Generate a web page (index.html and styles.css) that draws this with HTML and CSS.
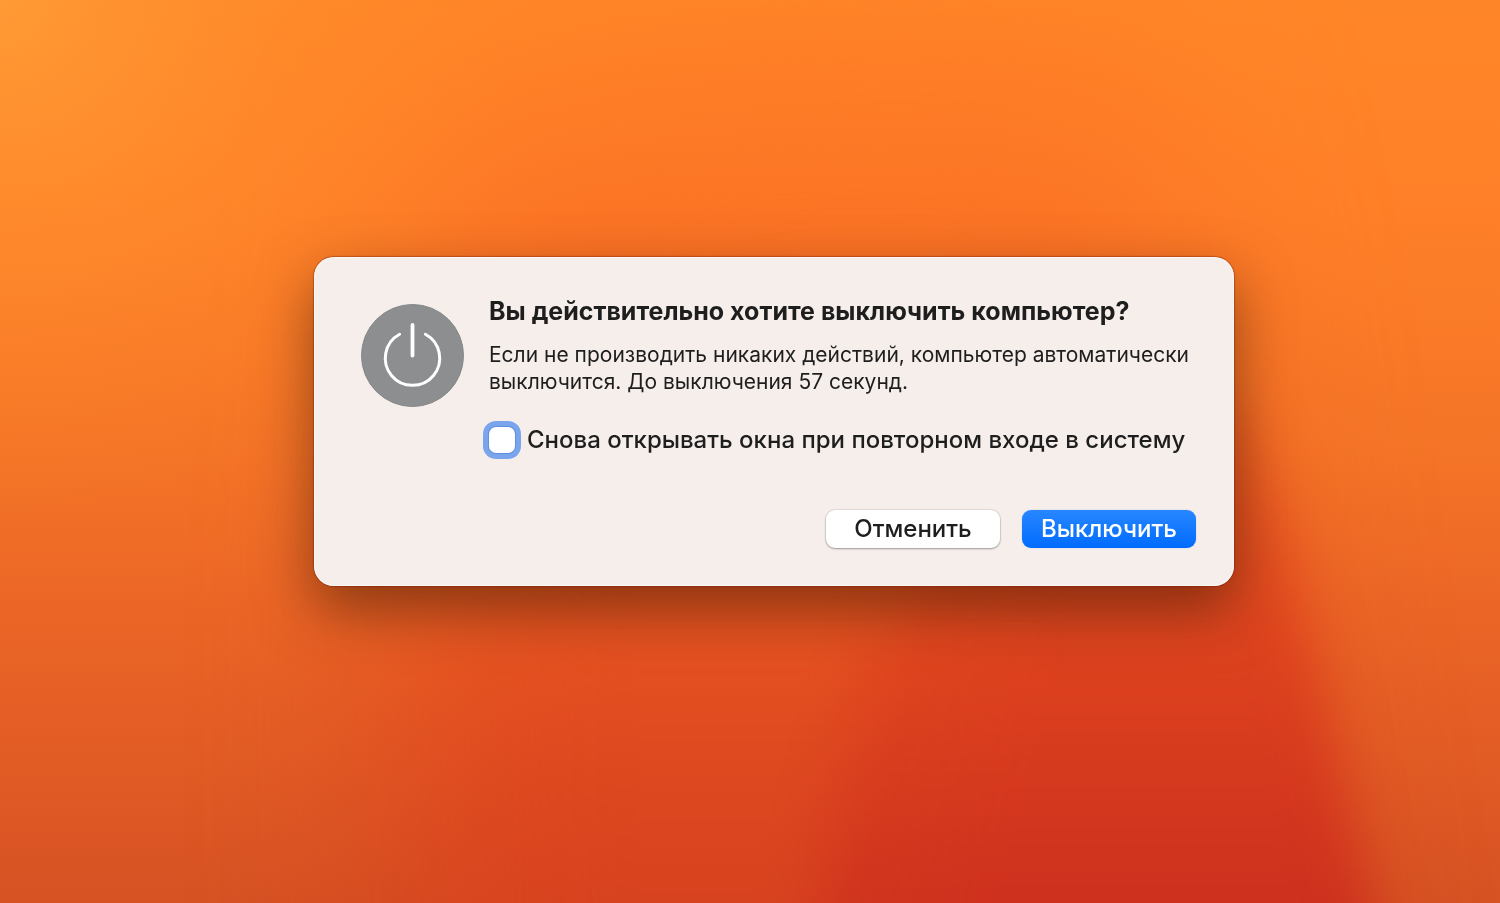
FILE: index.html
```html
<!DOCTYPE html>
<html lang="ru">
<head>
<meta charset="utf-8">
<meta name="viewport" content="width=device-width, initial-scale=1">
<title>Выключение компьютера</title>
<link rel="stylesheet" href="styles.css">
</head>
<body>
<svg class="wallpaper" viewBox="0 0 1500 903" preserveAspectRatio="none" aria-hidden="true">
  <defs>
    <linearGradient id="sky" x1="0" y1="0" x2="0" y2="1">
      <stop offset="0" stop-color="#ff8628"/>
      <stop offset=".22" stop-color="#ff8028"/>
      <stop offset=".5" stop-color="#f47427"/>
      <stop offset=".67" stop-color="#eb6626"/>
      <stop offset=".83" stop-color="#e25c25"/>
      <stop offset="1" stop-color="#d65223"/>
    </linearGradient>
    <linearGradient id="ember" gradientUnits="userSpaceOnUse" x1="0" y1="400" x2="0" y2="903">
      <stop offset="0" stop-color="#ea5c22"/>
      <stop offset=".5" stop-color="#dd421e"/>
      <stop offset="1" stop-color="#cd301e"/>
    </linearGradient>
    <linearGradient id="warm" gradientUnits="userSpaceOnUse" x1="0" y1="60" x2="0" y2="903">
      <stop offset="0" stop-color="#ff7c26"/>
      <stop offset=".2" stop-color="#fc7425"/>
      <stop offset=".45" stop-color="#ef6424"/>
      <stop offset=".72" stop-color="#e44e20"/>
      <stop offset="1" stop-color="#d6411f"/>
    </linearGradient>
    <linearGradient id="edge" gradientUnits="userSpaceOnUse" x1="780" y1="770" x2="1020" y2="830">
      <stop offset="0" stop-color="#000"/>
      <stop offset=".45" stop-color="#ccc"/>
      <stop offset="1" stop-color="#fff"/>
    </linearGradient>
    <radialGradient id="glow" gradientUnits="userSpaceOnUse" cx="0" cy="0" r="520">
      <stop offset="0" stop-color="#ff9a35"/>
      <stop offset=".4" stop-color="#ff9430" stop-opacity=".5"/>
      <stop offset="1" stop-color="#ff8a28" stop-opacity="0"/>
    </radialGradient>
    <mask id="fade" maskUnits="userSpaceOnUse" x="0" y="0" width="1500" height="903">
      <rect width="1500" height="903" fill="url(#edge)"/>
    </mask>
    <filter id="soft" x="-50%" y="-50%" width="200%" height="200%" color-interpolation-filters="sRGB"><feGaussianBlur stdDeviation="26"/></filter>
    <filter id="haze" x="-50%" y="-50%" width="200%" height="200%" color-interpolation-filters="sRGB"><feGaussianBlur stdDeviation="90"/></filter>
  </defs>
  <rect width="1500" height="903" fill="url(#sky)"/>
  <path d="M400 1200V560L440 160 700 60H1140L1200 330 1320 1200Z" fill="url(#warm)" filter="url(#haze)"/>
  <g mask="url(#fade)">
    <path d="M800 1050V780L850 640 1000 500 1130 400 1240 410 1282 520 1312 650 1342 780 1370 903 1395 1050Z" fill="url(#ember)" filter="url(#soft)"/>
  </g>
  <rect width="1500" height="903" fill="url(#glow)"/>
</svg>
<main class="desktop">
  <form class="dialog" role="alertdialog" aria-labelledby="title" aria-describedby="message">
    <svg class="power" viewBox="0 0 103 103" aria-hidden="true">
      <circle cx="51.5" cy="51.5" r="51" fill="#8c8e8f" stroke="#858788"/>
      <g fill="none" stroke="#fff" stroke-width="3" stroke-linecap="round">
        <path d="M51.5 21V51.5" stroke-width="3.8"/>
        <path d="M38.6 30.2A27.2 27.2 0 1 0 64.4 30.2"/>
      </g>
    </svg>
    <div class="content">
      <h1 class="title" id="title">Вы действительно хотите выключить компьютер?</h1>
      <p class="message" id="message">Если не производить никаких действий, компьютер автоматически выключится. До выключения 57 секунд.</p>
      <label class="option" for="reopen">
        <input class="checkbox" type="checkbox" id="reopen">
        <span>Снова открывать окна при повторном входе в систему</span>
      </label>
      <div class="actions">
        <button class="button" type="button">Отменить</button>
        <button class="button button-primary" type="submit">Выключить</button>
      </div>
    </div>
  </form>
</main>
</body>
</html>
```
FILE: styles.css
```css
* {
  box-sizing: border-box;
}

body {
  margin: 0;
  background: #f47427;
  color: #1f1e1e;
  font-family: Inter, "Liberation Sans", sans-serif;
}

.wallpaper {
  position: fixed;
  inset: 0;
  width: 100%;
  height: 100%;
}

.desktop {
  position: relative;
  display: flex;
  align-items: center;
  justify-content: center;
  min-height: 100vh;
  padding: 0 0 61px 48px;
}

.dialog {
  display: flex;
  align-items: flex-start;
  gap: 25px;
  width: 100%;
  max-width: 920px;
  padding: 38px 38px 38px 47px;
  border-radius: 20px;
  background: #f5eeeb;
  box-shadow:
    inset 0 0 1px 1px rgba(255, 255, 255, 0.6),
    0 0 1px 1px rgba(110, 20, 0, 0.35),
    0 24px 56px rgba(45, 20, 0, 0.5);
}

.power {
  flex: none;
  width: 103px;
  height: 103px;
  margin-top: 9px;
}

.content {
  flex: 1;
  min-width: 0;
}

.title {
  margin: 0 0 14px;
  font-size: 25px;
  font-weight: 700;
  line-height: 32px;
}

.message {
  margin: 0;
  font-size: 21px;
  line-height: 27px;
}

.option {
  display: flex;
  align-items: center;
  gap: 12px;
  margin-top: 31px;
  font-size: 24px;
  font-weight: 450;
  line-height: 28px;
}

.checkbox {
  appearance: none;
  flex: none;
  width: 26px;
  height: 26px;
  margin: 0;
  border-radius: 7px;
  background: #fff;
  box-shadow: 0 0 0 1px #5f8fdd, 0 0 0 6px #7aa5ec;
}

.checkbox:checked {
  background: #0a7aff;
}

.actions {
  display: flex;
  justify-content: flex-end;
  gap: 22px;
  margin-top: 56px;
}

.button {
  width: 174px;
  height: 38px;
  padding: 0;
  border: 0;
  border-radius: 9px;
  background: #fff;
  box-shadow: 0 0 1px 1px rgba(0, 0, 0, 0.08), 0 1px 2px rgba(0, 0, 0, 0.3);
  color: #1f1e1e;
  font-family: inherit;
  font-size: 24px;
  font-weight: 450;
  line-height: 36px;
}

.button-primary {
  background: linear-gradient(#2887ff, #006bff);
  box-shadow: 0 0 1px rgba(0, 107, 255, 0.5);
  color: #fff;
}
```
